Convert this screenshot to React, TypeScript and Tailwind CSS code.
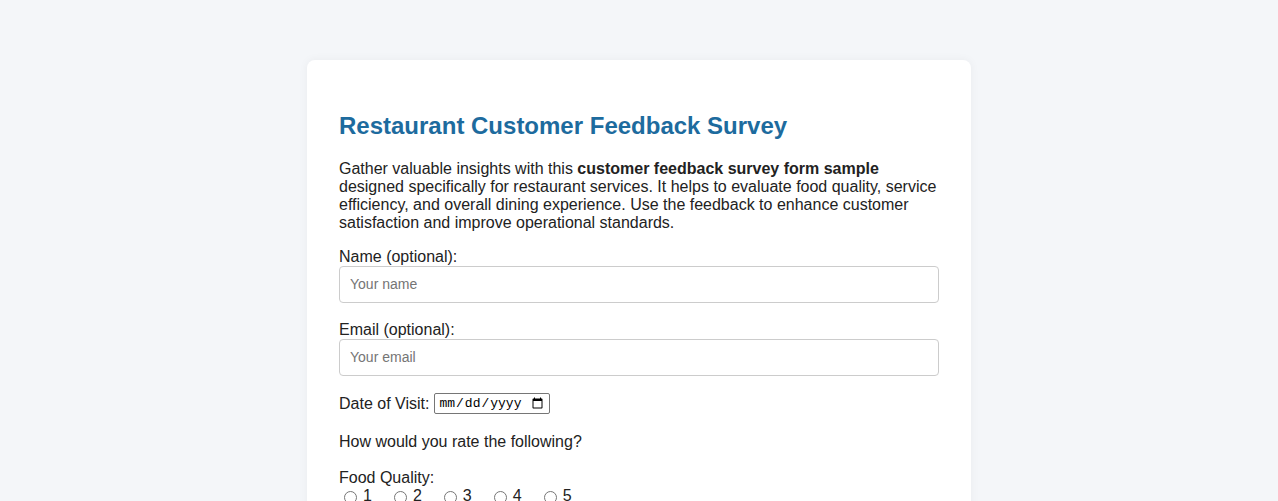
import { useState } from "react";

const ratings = [1, 2, 3, 4, 5];

export default function App() {
  const [form, setForm] = useState({ name: "", email: "", date: "", food: "" });

  return (
    <div className="min-h-screen bg-[#f4f6f9] pt-[60px] pb-10 font-['Liberation_Sans',Arial,sans-serif] text-[#222]">
      <div className="mx-auto w-[664px] rounded-lg bg-white px-8 pt-[52px] pb-8 shadow-[0_0_10px_rgba(0,0,0,0.05)]">
        <h1 className="text-2xl leading-[28px] font-bold text-[#1d6b9e]">
          Restaurant Customer Feedback Survey
        </h1>

        <p className="mt-[20px] mb-4 text-base leading-[18px]">
          Gather valuable insights with this <strong>customer feedback survey form sample</strong>{" "}
          designed specifically for restaurant services. It helps to evaluate food quality, service
          efficiency, and overall dining experience. Use the feedback to enhance customer
          satisfaction and improve operational standards.
        </p>

        <form onSubmit={(e) => e.preventDefault()} className="text-base leading-[18px]">
          <label className="block">Name (optional):</label>
          <input
            type="text"
            value={form.name}
            onChange={(e) => setForm({ ...form, name: e.target.value })}
            placeholder="Your name"
            className="mb-[18px] block w-full rounded border border-[#ccc] px-[10px] py-[10px] text-sm leading-[15px] placeholder:text-[#757575] focus:outline-none"
          />

          <label className="block">Email (optional):</label>
          <input
            type="email"
            value={form.email}
            onChange={(e) => setForm({ ...form, email: e.target.value })}
            placeholder="Your email"
            className="mb-[17px] block w-full rounded border border-[#ccc] px-[10px] py-[10px] text-sm leading-[15px] placeholder:text-[#757575] focus:outline-none"
          />

          <div className="flex items-center gap-[5px]">
            <label>Date of Visit:</label>
            <input
              type="date"
              value={form.date}
              onChange={(e) => setForm({ ...form, date: e.target.value })}
              className="h-[21px] w-[116px] rounded-[2px] border border-[#767676] px-[3px] font-['Liberation_Mono',monospace] text-[13px] text-black"
            />
          </div>

          <p className="mt-[19px]">How would you rate the following?</p>

          <p className="mt-[18px]">Food Quality:</p>
          <div className="flex items-center">
            {ratings.map((r) => (
              <label key={r} className="mr-[17px] inline-flex items-center">
                <input
                  type="radio"
                  name="food"
                  value={r}
                  checked={form.food === String(r)}
                  onChange={(e) => setForm({ ...form, food: e.target.value })}
                  className="mt-[3px] mr-[6px] ml-[5px] h-[13px] w-[13px]"
                />
                {r}
              </label>
            ))}
          </div>
        </form>
      </div>
    </div>
  );
}
